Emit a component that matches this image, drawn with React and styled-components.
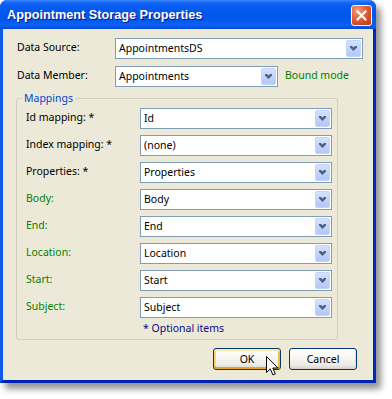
import React from "react";
import styled, { createGlobalStyle } from "styled-components";

const GlobalStyle = createGlobalStyle`
  html, body { margin: 0; padding: 0; background: #ffffff; }
  body { font-family: "Noto Sans", "DejaVu Sans", sans-serif; font-size: 10.5px; color: #000; }
  * { box-sizing: border-box; }
`;

const Stage = styled.div`
  position: relative;
  width: 392px;
  height: 399px;
`;

const Window = styled.div`
  width: 376px;
  height: 383px;
  display: flex;
  flex-direction: column;
  border-radius: 7px 7px 0 0;
  background: #0a52e6;
  box-shadow: 5px 6px 6px rgba(0, 0, 0, 0.42);
`;

const TitleBar = styled.div`
  height: 29px;
  flex: none;
  display: flex;
  align-items: flex-start;
  justify-content: space-between;
  padding: 5px 4px 0 7px;
  border-radius: 7px 7px 0 0;
  background: linear-gradient(
    to bottom,
    #3d8bff 0px,
    #1a6cf7 2px,
    #0a5ef2 5px,
    #0157ee 12px,
    #0157ec 20px,
    #0863f5 25px,
    #0650de 28px,
    #0340c8 29px
  );
`;

const Title = styled.div`
  font-family: "Liberation Sans", Arial, sans-serif;
  font-weight: bold;
  font-size: 12.7px;
  line-height: 21px;
  color: #ffffff;
  text-shadow: 1px 1px 0 #0a1883;
`;

const CloseButton = styled.div`
  width: 21px;
  height: 21px;
  border: 1px solid #ffffff;
  border-radius: 3px;
  background: radial-gradient(circle at 30% 25%, #f0a48a 0%, #e26a45 35%, #cf4422 75%, #b8381a 100%);
  display: flex;
  align-items: center;
  justify-content: center;
`;

const Client = styled.div`
  flex: 1;
  display: flex;
  flex-direction: column;
  background: #ece9d8;
  border-left: 3px solid #0b5be8;
  border-right: 3px solid #0028c0;
  border-bottom: 3px solid #0022b0;
  padding: 9px 16px 0 13px;
`;

const Row = styled.div`
  display: flex;
  align-items: center;
  height: 21px;
  margin-top: ${(p) => p.$mt || 0}px;
  padding-left: ${(p) => p.$pl || 0}px;
`;

const Label = styled.div`
  width: ${(p) => p.$w}px;
  flex: none;
  color: ${(p) => (p.$optional ? "#008000" : "#000000")};
  line-height: 13px;
  padding-bottom: 2px;
  white-space: nowrap;
`;

const Combo = styled.div`
  width: ${(p) => p.$w}px;
  height: 21px;
  flex: none;
  display: flex;
  align-items: center;
  justify-content: space-between;
  background: #ffffff;
  border: 1px solid #7f9db9;
  padding: 0 1px 0 3px;
`;

const ComboText = styled.span`
  line-height: 13px;
  white-space: nowrap;
`;

const DropButton = styled.div`
  width: 15px;
  height: 17px;
  display: flex;
  align-items: center;
  justify-content: center;
  border: 1px solid #c2d4fb;
  border-radius: 2px;
  background: linear-gradient(to bottom, #d6e2fd 0%, #c2d3fb 50%, #b3c7f6 100%);
`;

const Note = styled.span`
  margin-left: 7px;
  color: ${(p) => p.$color};
  line-height: 13px;
  padding-bottom: 2px;
`;

const Group = styled.fieldset`
  width: 322px;
  margin: 5px 0 0 0;
  padding: 4px 5px 5px 9px;
  border: 1px solid #d0d0bf;
  border-radius: 3px;
  display: flex;
  flex-direction: column;
`;

const Legend = styled.legend`
  color: #0046d5;
  line-height: 12px;
  padding: 0 2px;
  margin-left: -4px;
`;

const MapList = styled.div`
  display: flex;
  flex-direction: column;
  gap: 6px;
`;

const Footnote = styled.div`
  margin-top: 4px;
  padding-left: 117px;
  line-height: 12px;
  color: #0a0a8c;
`;

const ButtonRow = styled.div`
  display: flex;
  justify-content: flex-end;
  gap: 8px;
  margin-top: 8px;
`;

const Button = styled.div`
  width: 68px;
  height: 22px;
  display: flex;
  align-items: center;
  justify-content: center;
  border: 1px solid #003c74;
  border-radius: 3px;
  background: linear-gradient(to bottom, #ffffff 0%, #f7f7f3 40%, #ecebe5 80%, #d8d3c8 100%);
  box-shadow: ${(p) =>
    p.$hot
      ? "inset 0 2px 0 #ffe7a6, inset 0 -2px 0 #eba51c, inset 2px 0 0 #fbd27a, inset -2px 0 0 #f3bd4a"
      : "inset 0 -1px 0 #d6d0c5, inset -1px 0 0 #e3ded3"};
  line-height: 13px;
  color: #000;
`;

const Cursor = styled.svg`
  position: absolute;
  left: 266px;
  top: 356px;
  pointer-events: none;
`;

const Chevron = () => (
  <svg width="7" height="5" viewBox="0 0 7 5">
    <polygon points="0,0 2,0 3.5,1.6 5,0 7,0 7,1.4 3.5,5 0,1.4" fill="#4d6185" />
  </svg>
);

const ComboBox = ({ w, value }) => (
  <Combo $w={w}>
    <ComboText>{value}</ComboText>
    <DropButton>
      <Chevron />
    </DropButton>
  </Combo>
);

const mappings = [
  { label: "Id mapping: *", value: "Id" },
  { label: "Index mapping: *", value: "(none)" },
  { label: "Properties: *", value: "Properties" },
  { label: "Body:", value: "Body", optional: true },
  { label: "End:", value: "End", optional: true },
  { label: "Location:", value: "Location", optional: true },
  { label: "Start:", value: "Start", optional: true },
  { label: "Subject:", value: "Subject", optional: true },
];

export default function App() {
  return (
    <Stage>
      <GlobalStyle />
      <Window>
        <TitleBar>
          <Title>Appointment Storage Properties</Title>
          <CloseButton>
            <svg width="11" height="11" viewBox="0 0 11 11">
              <path d="M1.5 1.5 L9.5 9.5 M9.5 1.5 L1.5 9.5" stroke="#ffffff" strokeWidth="2.2" strokeLinecap="square" />
            </svg>
          </CloseButton>
        </TitleBar>
        <Client>
          <Row $pl={1}>
            <Label $w={98}>Data Source:</Label>
            <ComboBox w={248} value="AppointmentsDS" />
          </Row>
          <Row $pl={1} $mt={7}>
            <Label $w={98}>Data Member:</Label>
            <ComboBox w={163} value="Appointments" />
            <Note $color="#008000">Bound mode</Note>
          </Row>
          <Group>
            <Legend>Mappings</Legend>
            <MapList>
              {mappings.map((m) => (
                <Row key={m.label}>
                  <Label $w={114} $optional={m.optional}>
                    {m.label}
                  </Label>
                  <ComboBox w={192} value={m.value} />
                </Row>
              ))}
            </MapList>
            <Footnote>* Optional items</Footnote>
          </Group>
          <ButtonRow>
            <Button $hot>OK</Button>
            <Button>Cancel</Button>
          </ButtonRow>
        </Client>
      </Window>
      <Cursor width="13" height="21" viewBox="0 0 13 21">
        <path
          d="M0.5 0.5 L0.5 16.5 L4.3 12.8 L6.9 18.9 L9.3 17.9 L6.8 12 L11.9 12 Z"
          fill="#ffffff"
          stroke="#000000"
          strokeWidth="1"
          strokeLinejoin="miter"
        />
      </Cursor>
    </Stage>
  );
}
